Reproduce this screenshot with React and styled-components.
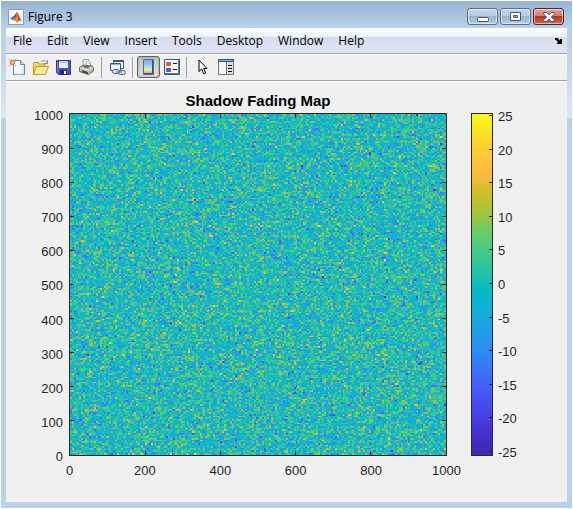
import { useEffect, useRef } from "react";
import styled, { createGlobalStyle } from "styled-components";

const MENUS = ["File", "Edit", "View", "Insert", "Tools", "Desktop", "Window", "Help"];
const X_TICKS = [0, 200, 400, 600, 800, 1000];
const Y_TICKS = [1000, 900, 800, 700, 600, 500, 400, 300, 200, 100, 0];
const BAR_TICKS = [25, 20, 15, 10, 5, 0, -5, -10, -15, -20, -25];

const CELLS = 200;
const SIGMA = 6;
const MAX_DB = 25.5;

// colour stops from low to high: position, r, g, b
const PARULA = [
  [0, 62, 38, 168],
  [0.07, 69, 51, 208],
  [0.143, 72, 71, 240],
  [0.21, 69, 97, 253],
  [0.286, 46, 135, 247],
  [0.36, 34, 157, 231],
  [0.43, 18, 177, 214],
  [0.48, 2, 186, 195],
  [0.57, 55, 200, 151],
  [0.64, 95, 204, 112],
  [0.71, 163, 198, 60],
  [0.77, 209, 191, 39],
  [0.83, 254, 186, 62],
  [0.91, 252, 210, 46],
  [1, 249, 251, 21],
];

const parulaGradient = PARULA.map(
  ([pos, r, g, b]) => `rgb(${r}, ${g}, ${b}) ${Math.round(pos * 100)}%`
).join(", ");

function parula(value) {
  const t = Math.min(1, Math.max(0, value));
  const i = Math.max(1, PARULA.findIndex((stop) => stop[0] >= t));
  const a = PARULA[i - 1];
  const b = PARULA[i];
  const k = (t - a[0]) / (b[0] - a[0]);
  return [1, 2, 3].map((c) => a[c] + (b[c] - a[c]) * k);
}

// seeded, so the map is the same on every load
function createRandom(seed) {
  let s = seed;
  return () => {
    s = (s + 0x6d2b79f5) | 0;
    let t = Math.imul(s ^ (s >>> 15), 1 | s);
    t = (t + Math.imul(t ^ (t >>> 7), 61 | t)) ^ t;
    return ((t ^ (t >>> 14)) >>> 0) / 4294967296;
  };
}

function FadingMap() {
  const ref = useRef(null);

  useEffect(() => {
    const ctx = ref.current.getContext("2d");
    const image = ctx.createImageData(CELLS, CELLS);
    const random = createRandom(7);

    for (let i = 0; i < CELLS * CELLS; i++) {
      const u = Math.sqrt(-2 * Math.log(1 - random()));
      const db = SIGMA * u * Math.cos(2 * Math.PI * random());
      const [r, g, b] = parula((db + MAX_DB) / (2 * MAX_DB));
      image.data.set([r, g, b, 255], i * 4);
    }
    ctx.putImageData(image, 0, 0);
  }, []);

  return <MapCanvas ref={ref} width={CELLS} height={CELLS} aria-label="Shadow fading in dB" />;
}

function AxisTicks() {
  return (
    <TickLayer aria-hidden="true">
      {X_TICKS.slice(1, -1).map((v) => (
        <g key={`x${v}`}>
          <svg x={`${v / 10}%`} y="0" overflow="visible">
            <path d="M0 0v4" />
          </svg>
          <svg x={`${v / 10}%`} y="100%" overflow="visible">
            <path d="M0 0v-4" />
          </svg>
        </g>
      ))}
      {Y_TICKS.slice(1, -1).map((v) => (
        <g key={`y${v}`}>
          <svg x="0" y={`${v / 10}%`} overflow="visible">
            <path d="M0 0h4" />
          </svg>
          <svg x="100%" y={`${v / 10}%`} overflow="visible">
            <path d="M0 0h-4" />
          </svg>
        </g>
      ))}
    </TickLayer>
  );
}

/* ---------------- Icons ---------------- */

const MatlabLogo = () => (
  <svg width="16" height="16" viewBox="0 0 16 16">
    <path d="M0 0h16v16H0z" fill="#f7f7f7" />
    <path d="M.5 15.500V.5h15v15z" fill="none" stroke="#8b98a8" />
    <path d="M2 9l3-1.500 2 1.800-2 2z" fill="#3f7fb5" />
    <path d="M5 7.500C7 7 7.500 4 9 3L7 9.300z" fill="#2b4f78" />
    <path d="M5 11.300l2-2L9 3c1.500 1.500 2.500 6.500 5 9-2-1-3-1-5 1.500-1-2-2-2.500-4-2.200z" fill="#c6401e" />
    <path d="M9 3c.5 3-.3 5-2.200 7L9 13.500c1-1.500 1.500-4 0-10.500z" fill="#f0913a" />
  </svg>
);

const NewIcon = () => (
  <svg width="17" height="17" viewBox="0 0 17 17">
    <path d="M4.500 1.500h7l4 4v10h-11z" fill="#f3f8ff" stroke="#6684b5" />
    <path d="M11.500 1.500v4h4" fill="#c6d9f3" stroke="#6684b5" />
    <path d="M14 7v8H6" fill="none" stroke="#bdd0ee" />
    <circle cx="3.500" cy="3.500" r="2.200" fill="#f5b37e" stroke="#d8662c" />
    <path d="M0 0l1.500 1.500M6 6l1 1M7 0L5.500 1.500M0 7l1.500-1.500" stroke="#e79058" />
  </svg>
);

const OpenIcon = () => (
  <svg width="17" height="17" viewBox="0 0 17 17">
    <path d="M1.500 15.500v-11l1-1h4l1 1.500h5.500v3" fill="#f7d35f" stroke="#c9951d" />
    <path d="M1.500 15.500l3-8h12l-3 8z" fill="#ffe98b" stroke="#c9951d" />
    <path d="M4 13l1.500-4h9" fill="none" stroke="#fff6c7" />
    <path d="M9 3c1.500-2 4-2 5.500.5M15.500 1v3.500H12" fill="none" stroke="#6f90ae" />
  </svg>
);

const SaveIcon = () => (
  <svg width="15" height="15" viewBox="0 0 15 15">
    <path d="M.5.5h14v14h-12l-2-2z" fill="#4a53c4" stroke="#343b9b" />
    <path d="M3 1h9v7H3z" fill="#e9effb" />
    <path d="M3 1h9v2H3z" fill="#b9c9ea" />
    <path d="M4 10h7v5H4z" fill="#252d72" />
    <path d="M8 11h2v3H8z" fill="#fff" />
    <path d="M1.500 2v10" stroke="#8389e5" />
  </svg>
);

const PrintIcon = () => (
  <svg width="15" height="16" viewBox="0 0 15 16">
    <path d="M4 7V1l5-1 3 6-3 3z" fill="#f5f7fc" stroke="#8594b2" />
    <path d="M6 3l3-.5M6 5l4-.5" stroke="#abb9d3" />
    <path d="M.5 8.500l4-2.500 9 1 1 2v3l-5 3.500-9-3z" fill="#b9b9b3" stroke="#66665f" />
    <path d="M1 9l8.500 2.500 5-3.500" fill="none" stroke="#eee" />
    <path d="M3 11l6 2v2l-6-1.500z" fill="#484848" />
    <path d="M5 7l6 .5-2 1.500-5-1z" fill="#585858" />
    <path d="M11 12l2-1.500" stroke="#9bb932" />
  </svg>
);

const LinkIcon = () => (
  <svg width="17" height="17" viewBox="0 0 17 17">
    <path d="M4.500 1.500h10v8h-10z" fill="#fff" stroke="#355785" />
    <path d="M4 1h11v2H4z" fill="#355785" />
    <path d="M1.500 4.500h10v7h-10z" fill="#eef4fb" stroke="#355785" />
    <path d="M2 5h9v1H2z" fill="#8fb0d4" />
    <rect x="3.500" y="10.500" width="7" height="4" rx="2" fill="#d8e0ea" stroke="#4d6485" />
    <rect x="9.500" y="11.500" width="7" height="4" rx="2" fill="#d8e0ea" stroke="#4d6485" />
    <path d="M7 13h6" stroke="#4d6485" />
  </svg>
);

const ColorbarIcon = () => (
  <svg width="11" height="16" viewBox="0 0 11 16">
    <defs>
      <linearGradient id="rainbow" x2="0" y2="1">
        <stop offset="0" stopColor="#a49cf0" />
        <stop offset=".35" stopColor="#7fd0ea" />
        <stop offset=".65" stopColor="#e8ee9b" />
        <stop offset="1" stopColor="#f39e83" />
      </linearGradient>
    </defs>
    <path d="M.5.5h10v15H.5z" fill="url(#rainbow)" stroke="#4c6f9f" />
    <path d="M9.500 1v13.500H1" fill="none" stroke="#2d4d80" />
  </svg>
);

const LegendIcon = () => (
  <svg width="16" height="16" viewBox="0 0 16 16">
    <path d="M.5.5h15v15H.5z" fill="#fff" stroke="#355785" />
    <path d="M14.500 1v13.500H1" fill="none" stroke="#5c78a2" />
    <path d="M2 3h5v4H2z" fill="#e45353" />
    <path d="M2 9h5v4H2z" fill="#5b5bd9" />
    <path d="M9 4.500h4M9 10.500h4" stroke="#111" />
  </svg>
);

const CursorIcon = () => (
  <svg width="10" height="16" viewBox="0 0 10 16">
    <path
      d="M1 1v11.500l2.700-2.500 2 4.700 2-.8-2-4.400H9z"
      fill="#fff"
      stroke="#000"
    />
  </svg>
);

const PlotToolsIcon = () => (
  <svg width="16" height="16" viewBox="0 0 16 16">
    <path d="M.5.5h15v15H.5z" fill="#f6f6f6" stroke="#777" />
    <path d="M0 0h16v3H0z" fill="#305b82" />
    <path d="M1 1.500h14" stroke="#86abc9" />
    <path d="M8.500 3v12" stroke="#777" />
    <path d="M9 3h6v12H9z" fill="#dedede" />
    <path d="M10 6.500h4M10 9.500h4M10 12.500h4" stroke="#111" />
  </svg>
);

const DockIcon = () => (
  <svg width="7" height="6" viewBox="0 0 7 6">
    <path d="M0 0h2.500L5 2.500V1h2v5H2V4.500h1.500L1 2H0z" fill="#000" />
  </svg>
);

const MinimizeIcon = () => (
  <svg width="12" height="12" viewBox="0 0 12 12">
    <rect x=".5" y="6.500" width="11" height="4" rx="1" fill="#fff" stroke="#4b5667" />
  </svg>
);

const RestoreIcon = () => (
  <svg width="11" height="9" viewBox="0 0 11 9">
    <path d="M.5.5h10v8H.5zM3.500 3.500v2h4v-2z" fill="#fff" stroke="#4b5667" fillRule="evenodd" />
  </svg>
);

const CloseIcon = () => (
  <svg width="12" height="10" viewBox="0 0 12 10">
    <path
      d="M.5.5h3L6 2.800 8.500.5h3v1.400L8.300 5l3.200 3.100v1.400h-3L6 7.200 3.500 9.500h-3V8.100L3.700 5 .5 1.900z"
      fill="#fff"
      stroke="#59515c"
    />
  </svg>
);

function App() {
  return (
    <>
      <GlobalStyle />
      <Window>
        <TitleBar>
          <MatlabLogo />
          <WindowTitle>Figure 3</WindowTitle>
          <WindowButtons>
            <WindowButton aria-label="Minimize"><MinimizeIcon /></WindowButton>
            <WindowButton aria-label="Maximize"><RestoreIcon /></WindowButton>
            <WindowButton $close aria-label="Close"><CloseIcon /></WindowButton>
          </WindowButtons>
        </TitleBar>

        <Client>
          <MenuBar>
            {MENUS.map((name) => (
              <MenuItem key={name}>{name}</MenuItem>
            ))}
            <DockButton aria-label="Dock figure"><DockIcon /></DockButton>
          </MenuBar>

          <Toolbar>
            <ToolButton aria-label="New figure"><NewIcon /></ToolButton>
            <ToolButton aria-label="Open file"><OpenIcon /></ToolButton>
            <ToolButton aria-label="Save figure"><SaveIcon /></ToolButton>
            <ToolButton aria-label="Print figure"><PrintIcon /></ToolButton>
            <Separator />
            <ToolButton aria-label="Link plot"><LinkIcon /></ToolButton>
            <Separator />
            <ToolButton $pressed aria-pressed="true" aria-label="Insert colorbar">
              <ColorbarIcon />
            </ToolButton>
            <ToolButton aria-label="Insert legend"><LegendIcon /></ToolButton>
            <Separator />
            <ToolButton aria-label="Edit plot"><CursorIcon /></ToolButton>
            <ToolButton aria-label="Show plot tools"><PlotToolsIcon /></ToolButton>
          </Toolbar>

          <Figure>
            <PlotTitle>Shadow Fading Map</PlotTitle>
            <YLabels>
              {Y_TICKS.map((v) => (
                <RowLabel key={v}>{v}</RowLabel>
              ))}
            </YLabels>
            <Axes>
              <FadingMap />
              <AxisTicks />
            </Axes>
            <Colorbar>
              {BAR_TICKS.map((v) => (
                <BarTick key={v} />
              ))}
            </Colorbar>
            <BarLabels>
              {BAR_TICKS.map((v) => (
                <RowLabel key={v}>{v}</RowLabel>
              ))}
            </BarLabels>
            <XLabels>
              {X_TICKS.map((v) => (
                <ColumnLabel key={v}>{v}</ColumnLabel>
              ))}
            </XLabels>
          </Figure>
        </Client>
      </Window>
    </>
  );
}

/* ---------------- Styled Components ---------------- */

const GlobalStyle = createGlobalStyle`
  * {
    box-sizing: border-box;
  }

  body {
    margin: 0;
    background: #fff;
  }

  button {
    margin: 0;
    padding: 0;
    border: none;
    background: none;
    font: inherit;
    color: inherit;
  }

  svg {
    display: block;
    flex: none;
  }
`;

const Window = styled.div`
  min-height: 100vh;
  display: flex;
  flex-direction: column;
  padding: 0 5px 6px;
  border: 1px solid #fff;
  background: linear-gradient(
    #98b4d2 0,
    #b9d1ea 27px,
    #bfd4ec 60px,
    #dde8f6 117px,
    #b9d1ea 117px
  );
  background-clip: padding-box;
  font-family: "Open Sans", "Noto Sans", sans-serif;
  font-size: 12px;
  color: #000;
`;

const TitleBar = styled.header`
  height: 27px;
  display: flex;
  align-items: center;
  padding: 4px 3px 0 2px;
`;

const WindowTitle = styled.span`
  flex: 1;
  margin-left: 4px;
  line-height: 16px;
`;

const WindowButtons = styled.div`
  display: flex;
  gap: 2px;
`;

const WindowButton = styled.button`
  width: 31px;
  height: 17px;
  display: flex;
  justify-content: center;
  align-items: center;
  border: 1px solid ${(p) => (p.$close ? "#5a2230" : "#586f8f")};
  border-radius: 3px;
  background: ${(p) =>
    p.$close
      ? "linear-gradient(#e4a89d 0%, #d27a6a 45%, #b43720 50%, #cc6a50 100%)"
      : "linear-gradient(#c5d7ea 0%, #b3cae2 45%, #98b4d1 50%, #b5cde6 100%)"};
  box-shadow: inset 0 0 0 1px rgba(255, 255, 255, 0.5);
`;

const Client = styled.main`
  flex: 1;
  display: flex;
  flex-direction: column;
  background: #f0f0f0;
`;

const MenuBar = styled.nav`
  height: 25px;
  display: flex;
  align-items: center;
  gap: 1px;
  background: linear-gradient(#fff 0, #eef1f9 9px, #d4dbed 9px, #e1e6f6 25px);
`;

const MenuItem = styled.button`
  height: 24px;
  padding: 0 7px;
  line-height: 24px;
`;

const DockButton = styled.button`
  margin-left: auto;
  padding: 4px 5px;
`;

const Toolbar = styled.div`
  height: 28px;
  display: flex;
  align-items: center;
  border-top: 1px solid #a0a0a0;
  border-bottom: 1px solid #a0a0a0;
  box-shadow: inset 0 1px #fff, 0 1px #fff;
`;

const ToolButton = styled.button`
  width: 23px;
  height: 22px;
  display: flex;
  justify-content: center;
  align-items: center;
  border: ${(p) => (p.$pressed ? "1px solid #666" : "none")};
  border-radius: 3px;
  background: ${(p) => (p.$pressed ? "linear-gradient(#c3c3c3, #e2e2e2)" : "none")};
  box-shadow: ${(p) => (p.$pressed ? "inset 0 0 2px #777" : "none")};
`;

const Separator = styled.span`
  width: 1px;
  height: 21px;
  margin: 0 4px 0 3px;
  background: #a0a0a0;
`;

const Figure = styled.section`
  flex: 1;
  display: grid;
  grid-template-columns: 58px 1fr 22px 24px;
  grid-template-rows: 20px 1fr 22px;
  padding: 12px 50px 24px 5px;
  font-family: "Liberation Sans", Arial, sans-serif;
  font-size: 13px;
  color: #262626;
`;

const PlotTitle = styled.h1`
  grid-area: 1 / 2;
  margin: 0 24px 0 0;
  font-size: 15px;
  line-height: 16px;
  text-align: center;
  color: #000;
`;

const YLabels = styled.div`
  grid-area: 2 / 1;
  display: flex;
  flex-direction: column;
  justify-content: space-between;
  align-items: flex-end;
  padding-right: 6px;
`;

const RowLabel = styled.span`
  height: 2px;
  line-height: 6px;
`;

const Axes = styled.div`
  grid-area: 2 / 2;
  position: relative;
  min-height: 200px;
  margin-right: 24px;
  border: 1px solid #262626;
`;

const MapCanvas = styled.canvas`
  position: absolute;
  inset: 0;
  width: 100%;
  height: 100%;
  image-rendering: pixelated;
`;

const TickLayer = styled.svg`
  position: absolute;
  inset: 0;
  width: 100%;
  height: 100%;
  stroke: #262626;
  shape-rendering: crispEdges;
`;

const Colorbar = styled.div`
  grid-area: 2 / 3;
  display: flex;
  flex-direction: column;
  justify-content: space-between;
  align-items: flex-end;
  padding: 1px 0 3px;
  border: 1px solid #262626;
  background: linear-gradient(to top, ${parulaGradient});
`;

const BarTick = styled.span`
  width: 3px;
  height: 1px;
  background: #262626;
`;

const BarLabels = styled.div`
  grid-area: 2 / 4;
  display: flex;
  flex-direction: column;
  justify-content: space-between;
  padding: 1px 0 4px 5px;
`;

const XLabels = styled.div`
  grid-area: 3 / 2;
  display: flex;
  justify-content: space-between;
  margin-right: 24px;
  padding-top: 7px;
`;

const ColumnLabel = styled.span`
  width: 1px;
  display: flex;
  justify-content: center;
  line-height: 16px;
`;

export default App;
